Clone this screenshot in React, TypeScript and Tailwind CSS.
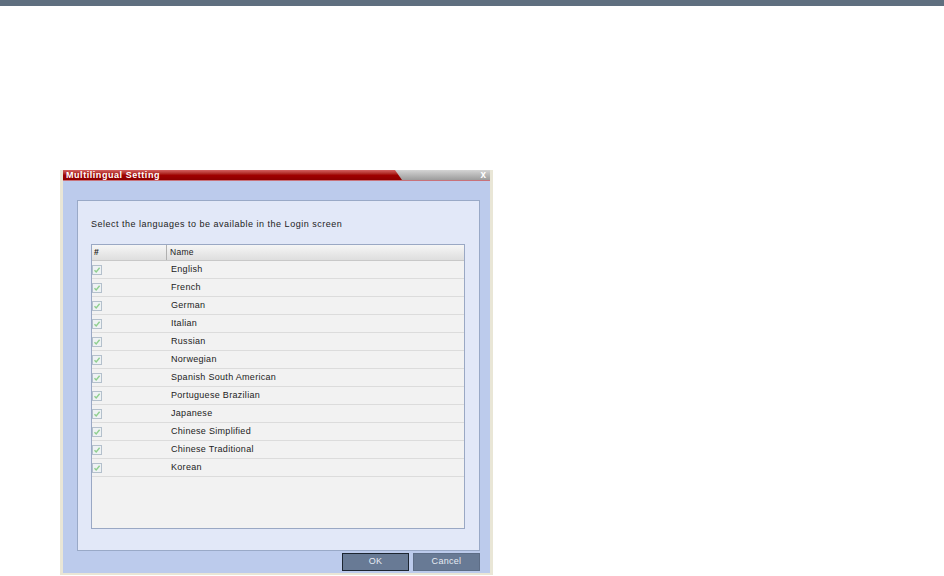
const languages = [
  "English",
  "French",
  "German",
  "Italian",
  "Russian",
  "Norwegian",
  "Spanish South American",
  "Portuguese Brazilian",
  "Japanese",
  "Chinese Simplified",
  "Chinese Traditional",
  "Korean",
];

function CheckBox() {
  return (
    <span className="flex h-[10px] w-[10px] items-center justify-center border border-[#b4c0cc] bg-[#eef2f4]">
      <svg width="8" height="8" viewBox="0 0 8 8">
        <path d="M1.5 4.2 L3.2 6 L6.6 1.8" fill="none" stroke="#8fcf8f" strokeWidth="1.4" />
      </svg>
    </span>
  );
}

export default function App() {
  return (
    <div className="h-[576px] w-[944px] overflow-hidden bg-white font-['Liberation_Sans',Arial,sans-serif]">
      <div className="h-[6px] bg-[#5f6f7f]" />

      {/* Dialog */}
      <div className="ml-[60px] mt-[164px] w-[433px] border-x-[3px] border-b-[2px] border-[#e9e6d6]">
        {/* Title bar */}
        <div className="relative flex h-[11px] border-b border-[#c8727a] bg-gradient-to-b from-[#d4d4d4] to-[#9c9c9c]">
          <div className="flex h-full w-[339px] items-center bg-gradient-to-b from-[#d46060] via-[#a00000] to-[#8c0000] pl-[3px] [clip-path:polygon(0_0,calc(100%-7px)_0,100%_100%,0_100%)]">
            <span className="text-[9px] font-bold leading-none tracking-[0.55px] text-white">
              Multilingual Setting
            </span>
          </div>
          <span className="absolute right-[4px] top-[0px] text-[10px] font-bold leading-[9px] text-white">
            x
          </span>
        </div>

        {/* Body */}
        <div className="flex h-[392px] flex-col bg-[#bccbec] pl-[14px] pr-[10px] pt-[19px]">
          <div className="flex h-[351px] flex-col border border-[#99a9c7] bg-[#e2e8f8] pl-[13px] pr-[14px] pt-[19px]">
            <p className="h-[24px] text-[9px] leading-none tracking-[0.5px] text-[#222]">
              Select the languages to be available in the Login screen
            </p>
            <div className="h-[285px] border border-[#9aa8c4] bg-[#f2f2f2]">
              <div className="flex h-[16px] border-b border-[#c8c8c8] bg-gradient-to-b from-[#f6f6f6] to-[#dedede] text-[8.5px] leading-[15px] tracking-[0.3px] text-[#222]">
                <div className="w-[75px] border-r border-[#b0b0b0] pl-[2px] font-bold">#</div>
                <div className="pl-[3px]">Name</div>
              </div>
              {languages.map((lang) => (
                <div
                  key={lang}
                  className="flex h-[18px] items-center border-b border-[#dcdcdc] text-[9px] tracking-[0.3px] text-[#222]"
                >
                  <div className="w-[79px]">
                    <CheckBox />
                  </div>
                  <div>{lang}</div>
                </div>
              ))}
            </div>
          </div>
          <div className="mt-[2px] flex justify-end gap-[4px]">
            <button className="h-[18px] w-[67px] border border-[#1c2530] bg-[#687a95] text-[9px] tracking-[0.3px] text-[#e6ebf3]">
              OK
            </button>
            <button className="h-[18px] w-[67px] border border-[#5d6d86] bg-[#687a95] text-[9px] tracking-[0.3px] text-[#e6ebf3]">
              Cancel
            </button>
          </div>
        </div>
      </div>
    </div>
  );
}
